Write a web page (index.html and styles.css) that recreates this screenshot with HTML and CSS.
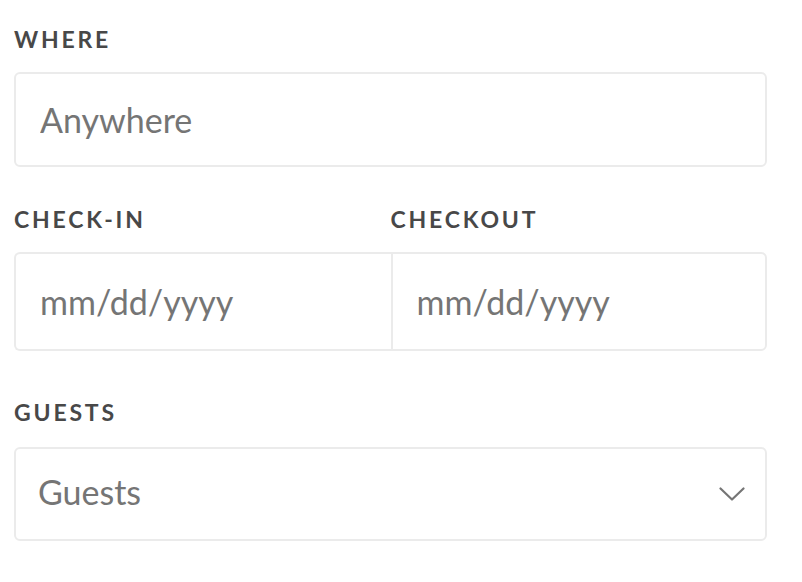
FILE: index.html
```html
<!DOCTYPE html>
<html lang="en">
<head>
<meta charset="utf-8">
<title>Search</title>
<link rel="stylesheet" href="styles.css">
</head>
<body>
<form class="search">
  <div class="field field-where">
    <label class="label" for="where">Where</label>
    <input class="input" id="where" type="text" placeholder="Anywhere">
  </div>
  <div class="dates">
    <div class="date-col">
      <label class="label" for="checkin">Check-in</label>
      <input class="input input-date input-left" id="checkin" type="text" placeholder="mm/dd/yyyy">
    </div>
    <div class="date-col">
      <label class="label" for="checkout">Checkout</label>
      <input class="input input-date input-right" id="checkout" type="text" placeholder="mm/dd/yyyy">
    </div>
  </div>
  <div class="field field-guests">
    <label class="label" for="guests">Guests</label>
    <div class="select-wrap">
      <select class="input select" id="guests">
        <option>Guests</option>
      </select>
      <svg class="chevron" width="26" height="15" viewBox="0 0 26 15" aria-hidden="true">
        <polyline points="1.5,1.5 13,12.5 24.5,1.5" fill="none" stroke="#757575" stroke-width="2.2" stroke-linecap="round" stroke-linejoin="round"/>
      </svg>
    </div>
  </div>
</form>
</body>
</html>
```
FILE: styles.css
```css
* { box-sizing: border-box; }

html, body {
  margin: 0;
  background: #ffffff;
}

body {
  font-family: "Lato", "Open Sans", sans-serif;
}

.search {
  width: 767px;
  padding: 24px 0 0 14px;
  display: flex;
  flex-direction: column;
}

.label {
  display: block;
  font-family: "Lato", sans-serif;
  font-weight: 700;
  font-size: 23px;
  line-height: 30px;
  letter-spacing: 2.8px;
  text-transform: uppercase;
  color: #484848;
  margin-bottom: 18px;
}

.input {
  display: block;
  width: 100%;
  height: 95px;
  margin: 0;
  padding: 0 24px;
  border: 2px solid #ebebeb;
  border-radius: 6px;
  background: #ffffff;
  font-family: "Lato", sans-serif;
  font-size: 34px;
  font-weight: 400;
  color: #484848;
  outline: none;
}

.input::placeholder {
  color: #757575;
  opacity: 1;
}

.dates {
  display: flex;
  margin-top: 37px;
}

.date-col {
  flex: 1 1 0;
  min-width: 0;
}

.input-date {
  height: 99px;
}

.input-left {
  border-right: none;
  border-radius: 6px 0 0 6px;
}

.input-right {
  border-radius: 0 6px 6px 0;
}

.field-guests {
  margin-top: 46px;
}

.field-guests .label {
  margin-bottom: 20px;
}

.select-wrap {
  position: relative;
}

.select {
  appearance: none;
  -webkit-appearance: none;
  height: 94px;
  padding-left: 22px;
  padding-bottom: 5px;
  color: #757575;
}

.chevron {
  position: absolute;
  right: 22px;
  top: 40px;
  pointer-events: none;
}
```
